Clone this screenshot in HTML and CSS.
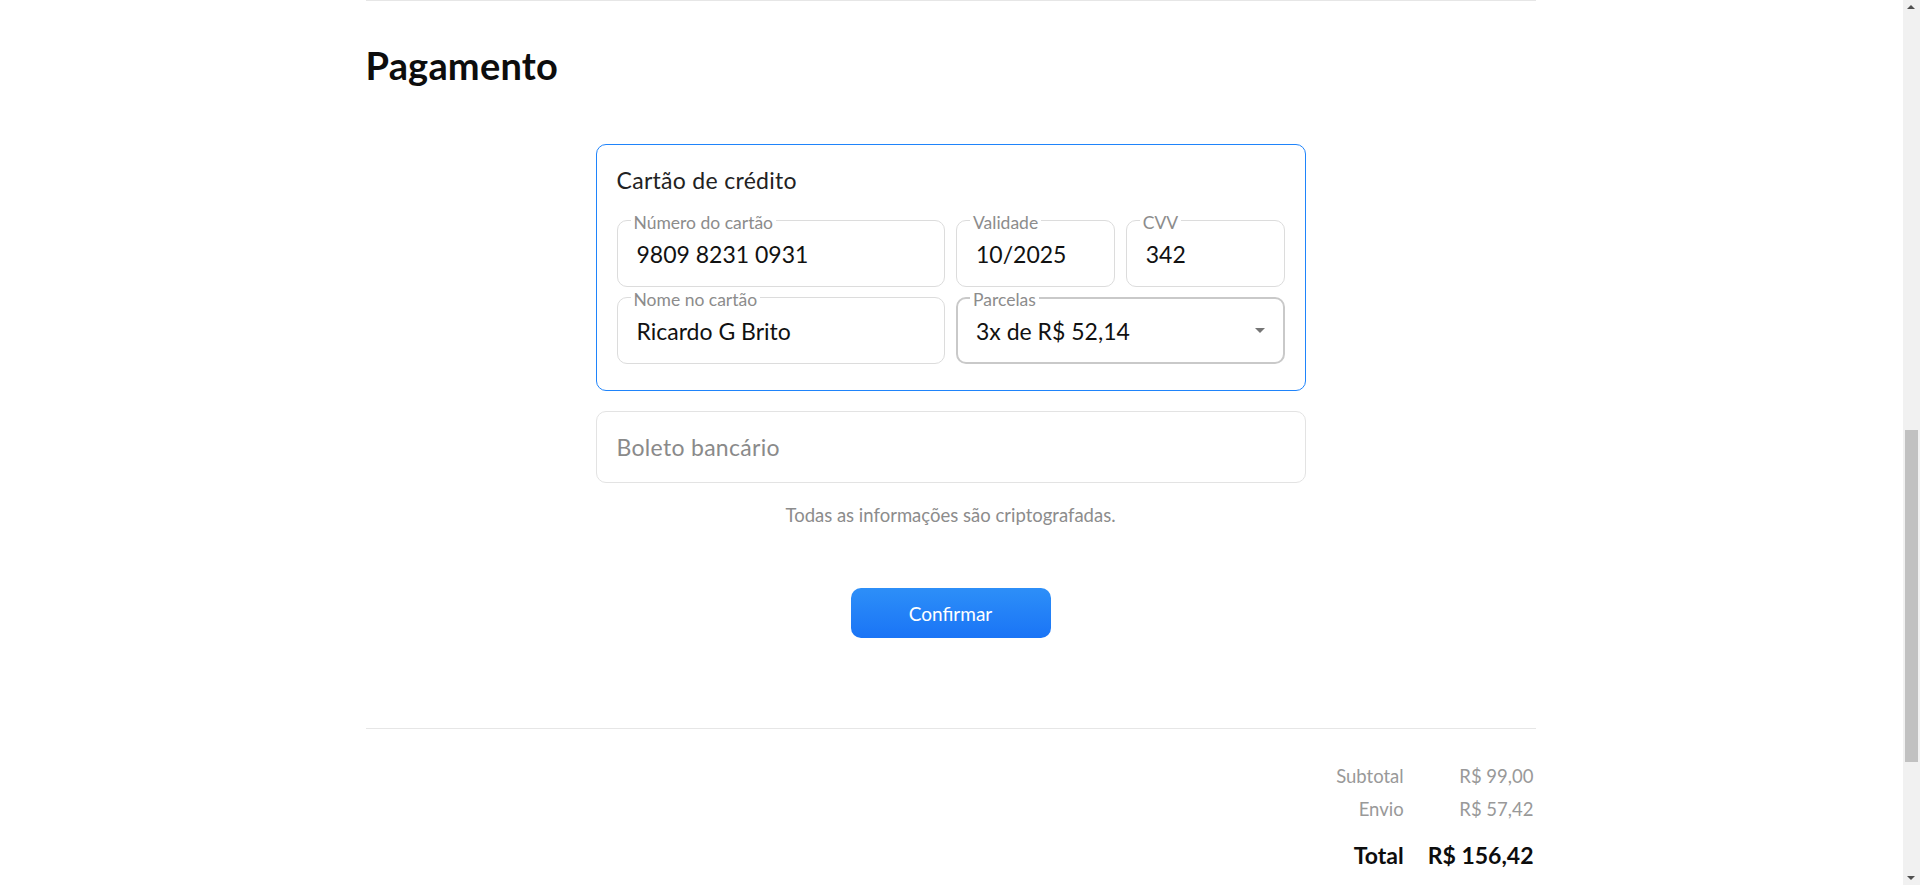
FILE: index.html
```html
<!DOCTYPE html>
<html lang="pt-BR">
<head>
<meta charset="utf-8">
<title>Pagamento</title>
<link rel="stylesheet" href="styles.css">
</head>
<body>
<div class="page">
  <section class="payment">
    <h1 class="title">Pagamento</h1>
    <div class="methods">
      <div class="method method-active">
        <div class="method-title">Cartão de crédito</div>
        <div class="fields">
          <div class="field span2"><span class="label">Número do cartão</span><span class="value num">9809 8231 0931</span></div>
          <div class="field"><span class="label">Validade</span><span class="value">10/2025</span></div>
          <div class="field"><span class="label">CVV</span><span class="value">342</span></div>
          <div class="field span2"><span class="label">Nome no cartão</span><span class="value">Ricardo G Brito</span></div>
          <div class="field span2 select"><span class="label">Parcelas</span><span class="value">3x de R$ 52,14</span><span class="caret"></span></div>
        </div>
      </div>
      <div class="method method-boleto">
        <div class="method-title muted">Boleto bancário</div>
      </div>
      <p class="note">Todas as informações são criptografadas.</p>
      <button class="confirm" type="button">Confirmar</button>
    </div>
  </section>
  <section class="summary">
    <div class="totals">
      <span class="t-label">Subtotal</span><span class="t-value">R$ 99,00</span>
      <span class="t-label">Envio</span><span class="t-value">R$ 57,42</span>
      <span class="t-label total">Total</span><span class="t-value total">R$ 156,42</span>
    </div>
  </section>
</div>
<div class="scrollbar" aria-hidden="true">
  <span class="sb-arrow sb-up"></span>
  <span class="sb-thumb"></span>
  <span class="sb-arrow sb-down"></span>
</div>
</body>
</html>
```
FILE: styles.css
```css
body {
  margin: 0;
  padding-right: 17px;
  background: #ffffff;
  font-family: Lato, "Open Sans", sans-serif;
  color: #111111;
}
.page {
  width: 1170px;
  margin: 0 auto;
  transform: translateX(-1px);
}
.payment {
  border-top: 1px solid #e6e6e6;
  border-bottom: 1px solid #e6e6e6;
  padding-top: 41px;
  padding-bottom: 90px;
}
.title {
  margin: 0;
  font-size: 38px;
  line-height: 46px;
  font-weight: 700;
  letter-spacing: 0.2px;
  color: #0d0d0d;
}
.methods {
  margin-top: 56px;
  display: flex;
  flex-direction: column;
  align-items: center;
}
.method {
  box-sizing: border-box;
  width: 710px;
  border: 1px solid #e3e3e3;
  border-radius: 10px;
}
.method-active {
  border-color: #1f84fb;
  padding: 20px 20px 26px;
}
.method-boleto {
  margin-top: 20px;
  height: 72px;
  padding: 0 20px;
  display: flex;
  align-items: center;
}
.method-title {
  font-size: 23px;
  line-height: 30px;
  letter-spacing: 0.3px;
  color: #222222;
}
.method-title.muted {
  color: #8a8a8a;
}
.fields {
  margin-top: 25px;
  display: grid;
  grid-template-columns: repeat(4, 1fr);
  grid-auto-rows: 67px;
  column-gap: 11px;
  row-gap: 10px;
}
.field {
  position: relative;
  box-sizing: border-box;
  border: 1px solid #dcdcdc;
  border-radius: 10px;
  padding: 0 18px 0 19px;
  display: flex;
  align-items: center;
}
.span2 {
  grid-column: span 2;
}
.field.select {
  border: 2px solid #c9c9c9;
  padding-left: 18px;
}
.label {
  position: absolute;
  top: -7px;
  left: 13px;
  padding: 0 3px;
  background: #ffffff;
  font-size: 17.5px;
  line-height: 18px;
  color: #8c8c8c;
}
.select .label {
  top: -8px;
  left: 12px;
}
.value {
  font-size: 23px;
  color: #111111;
}
.value.num {
  letter-spacing: 0;
}
.caret {
  margin-left: auto;
  width: 0;
  height: 0;
  border-left: 5px solid transparent;
  border-right: 5px solid transparent;
  border-top: 5px solid #757575;
}
.note {
  margin: 20px 0 0;
  font-size: 18.5px;
  line-height: 24px;
  color: #8c8c8c;
}
.confirm {
  margin-top: 61px;
  width: 200px;
  height: 50px;
  border: none;
  border-radius: 10px;
  background: linear-gradient(#2d8ff8, #1a74f6);
  color: #ffffff;
  font-family: inherit;
  font-size: 19px;
}
.summary {
  padding-top: 31px;
  padding-bottom: 4px;
}
.totals {
  display: grid;
  grid-template-columns: auto auto;
  justify-content: end;
  column-gap: 24px;
  padding-right: 2px;
  text-align: right;
  font-size: 18.5px;
  line-height: 33px;
  color: #999999;
}
.total {
  margin-top: 13px;
  font-size: 23px;
  font-weight: 700;
  color: #0d0d0d;
}
.scrollbar {
  position: fixed;
  top: 0;
  right: 0;
  width: 17px;
  height: 100%;
  background: #f1f1f1;
}
.sb-thumb {
  position: absolute;
  top: 430px;
  left: 2px;
  width: 13px;
  height: 332px;
  background: #c1c1c1;
}
.sb-arrow {
  position: absolute;
  left: 4px;
  width: 0;
  height: 0;
  border-left: 4.5px solid transparent;
  border-right: 4.5px solid transparent;
}
.sb-up {
  top: 5px;
  border-bottom: 4px solid #505050;
}
.sb-down {
  bottom: 5px;
  border-top: 4px solid #505050;
}
```
